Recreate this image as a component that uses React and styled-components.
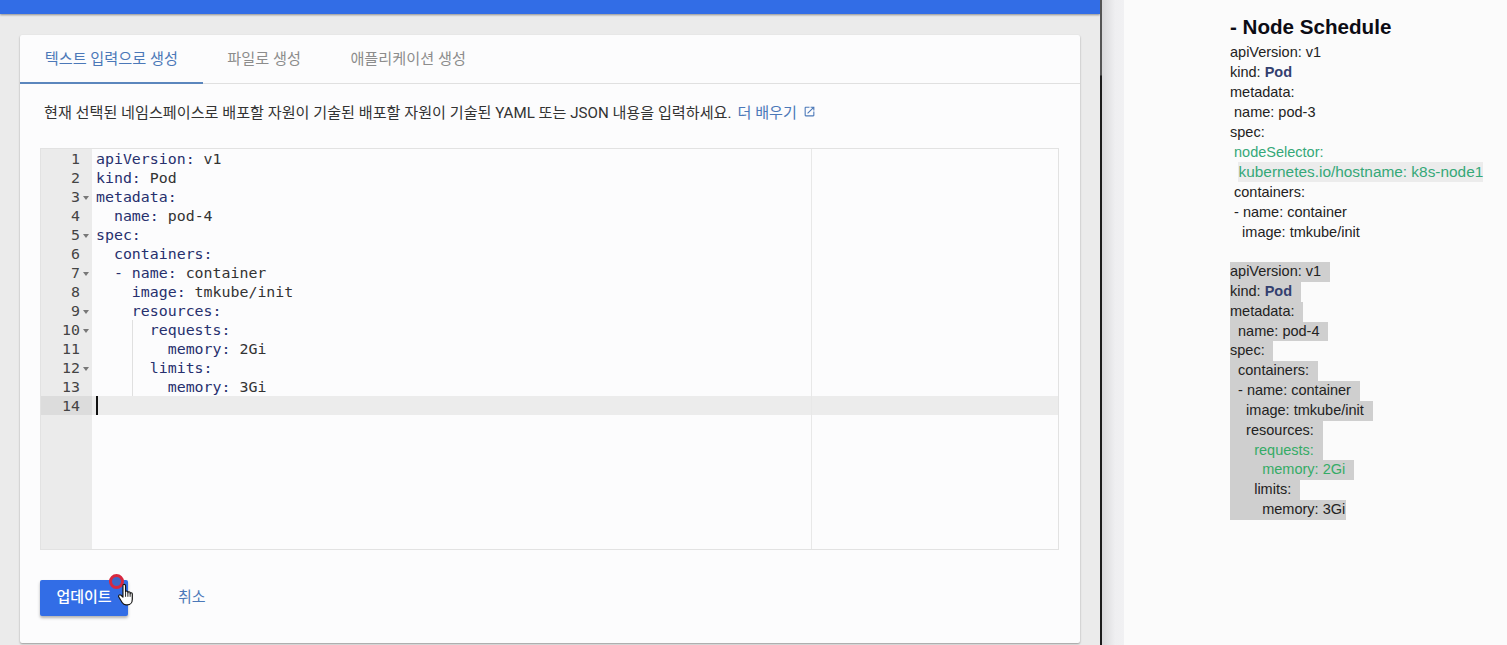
import React from 'react';
import styled, { createGlobalStyle } from 'styled-components';
import { MdOpenInNew } from 'react-icons/md';

const kr = `Roboto, 'Noto Sans CJK KR', sans-serif`;

const codeLines = [
  { key: 'apiVersion:', value: ' v1' },
  { key: 'kind:', value: ' Pod' },
  { key: 'metadata:', fold: true },
  { key: '  name:', value: ' pod-4' },
  { key: 'spec:', fold: true },
  { key: '  containers:' },
  { key: '  - name:', value: ' container', fold: true },
  { key: '    image:', value: ' tmkube/init' },
  { key: '    resources:', fold: true },
  { key: '      requests:', fold: true, guide: true },
  { key: '        memory:', value: ' 2Gi', guide: true },
  { key: '      limits:', fold: true, guide: true },
  { key: '        memory:', value: ' 3Gi', guide: true },
  { active: true },
];

const firstNote = [
  { text: 'apiVersion: v1' },
  { text: 'kind: ', pod: true },
  { text: 'metadata:' },
  { text: ' name: pod-3' },
  { text: 'spec:' },
  { text: ' nodeSelector:', green: true },
  { text: '  kubernetes.io/hostname: k8s-node1', green: true, mark: true },
  { text: ' containers:' },
  { text: ' - name: container' },
  { text: '   image: tmkube/init' },
];

const secondNote = [
  { text: 'apiVersion: v1', w: 100 },
  { text: 'kind: ', pod: true, w: 71 },
  { text: 'metadata:', w: 73 },
  { text: '  name: pod-4', w: 98 },
  { text: 'spec:', w: 43 },
  { text: '  containers:', w: 88 },
  { text: '  - name: container', w: 130 },
  { text: '    image: tmkube/init', w: 143 },
  { text: '    resources:', w: 93 },
  { text: '      requests:', w: 93, green: true },
  { text: '        memory: 2Gi', w: 124, green: true },
  { text: '      limits:', w: 70 },
  { text: '        memory: 3Gi', w: 116 },
];

const App = () => {
  return (
    <React.Fragment>
      <GlobalStyle />
      <Page>
        <LeftPane>
          <TopBar />
          <Content>
            <Card>
              <Tabs>
                <Tab $active>텍스트 입력으로 생성</Tab>
                <Tab>파일로 생성</Tab>
                <Tab>애플리케이션 생성</Tab>
              </Tabs>
              <CardBody>
                <Description>
                  현재 선택된 네임스페이스로 배포할 자원이 기술된 배포할 자원이 기술된 YAML 또는 JSON 내용을 입력하세요.
                  <LearnMore>더 배우기<MdOpenInNew size={13} /></LearnMore>
                </Description>
                <Editor>
                  <PrintMargin />
                  {codeLines.map((line, i) => (
                    <CodeRow key={i} $active={line.active}>
                      <LineNo $active={line.active}>
                        <span>{i + 1}</span>
                        <FoldMark $show={line.fold} />
                      </LineNo>
                      <CodeText $guide={line.guide}>
                        {line.active && <Caret />}
                        {line.key && <CodeKey>{line.key}</CodeKey>}
                        {line.value}
                      </CodeText>
                    </CodeRow>
                  ))}
                  <EditorRest />
                </Editor>
                <Actions>
                  <UpdateButton>
                    업데이트
                    <ClickRing />
                    <HandCursor viewBox="0 0 20 26">
                      <path
                        d="M6.6 2.6c0-2 2.9-2 2.9 0v7.2c0-1.7 2.6-1.6 2.6 0v.7c0-1.6 2.5-1.5 2.5.1v.9c0-1.4 2.4-1.3 2.4.4v5.7c0 3.4-2 6.4-5.6 6.4H10c-2 0-3.3-1-4.3-2.6L2 15.300c-1-1.700 1-3.400 2.500-2l2.100 2z"
                        fill="#fff"
                        stroke="#111"
                        strokeWidth="1.3"
                        strokeLinejoin="round"
                      />
                      <path d="M9.500 10v5M12.100 10.500v4.500M14.600 11.500v3.500" stroke="#111" strokeWidth="1" fill="none" />
                    </HandCursor>
                  </UpdateButton>
                  <CancelButton>취소</CancelButton>
                </Actions>
              </CardBody>
            </Card>
          </Content>
        </LeftPane>
        <Divider />
        <Scrollbar />
        <Notes>
          <NoteTitle>- Node Schedule</NoteTitle>
          <NoteGroup>
            {firstNote.map((line, i) => (
              <NoteLine key={i} $green={line.green} $mark={line.mark}>
                {line.text}
                {line.pod && <Pod>Pod</Pod>}
              </NoteLine>
            ))}
          </NoteGroup>
          <SelectedGroup>
            {secondNote.map((line, i) => (
              <SelectedLine key={i} $green={line.green} $w={line.w}>
                {line.text}
                {line.pod && <Pod>Pod</Pod>}
              </SelectedLine>
            ))}
          </SelectedGroup>
        </Notes>
      </Page>
    </React.Fragment>
  );
};

const GlobalStyle = createGlobalStyle`
  html, body {
    margin: 0;
    padding: 0;
    height: 100%;
    overflow: hidden;
    background: #fbfbfb;
  }
  * {
    box-sizing: border-box;
  }
`;

const Page = styled.div`
  display: flex;
  width: 1507px;
  height: 645px;
  overflow: hidden;
`;

const LeftPane = styled.div`
  display: flex;
  flex-direction: column;
  width: 1100px;
  height: 100%;
  background: #ebebeb;
`;

const TopBar = styled.div`
  height: 14px;
  flex-shrink: 0;
  background: #326de6;
  box-shadow: 0 1px 2px rgba(0, 0, 0, 0.4);
`;

const Content = styled.div`
  flex: 1;
  padding: 21px 20px 2px 20px;
`;

const Card = styled.div`
  display: flex;
  flex-direction: column;
  height: 100%;
  background: #fcfcfd;
  border-radius: 2px;
  box-shadow: 0 1px 2px rgba(0, 0, 0, 0.35);
`;

const Tabs = styled.div`
  display: flex;
  height: 49px;
  flex-shrink: 0;
  border-bottom: 1px solid #e0e0e0;
`;

const Tab = styled.div`
  display: flex;
  align-items: center;
  height: 49px;
  padding: 0 24.700px 3px;
  font-family: ${kr};
  font-size: 15.200px;
  color: ${(p) => (p.$active ? '#4b78b8' : '#8c8c8c')};
  border-bottom: 2px solid ${(p) => (p.$active ? '#5b86bd' : 'transparent')};
`;

const CardBody = styled.div`
  flex: 1;
  padding: 0 21px 0 20px;
`;

const Description = styled.div`
  display: flex;
  align-items: center;
  height: 64px;
  padding: 0 0 10px 4px;
  font-family: ${kr};
  font-size: 15.130px;
  color: #333;
  white-space: pre;
`;

const LearnMore = styled.span`
  display: inline-flex;
  align-items: center;
  gap: 6px;
  margin-left: 6px;
  color: #4b78b8;
`;

const Editor = styled.div`
  position: relative;
  display: flex;
  flex-direction: column;
  height: 402px;
  border: 1px solid #e2e2e2;
  font-family: 'DejaVu Sans Mono', monospace;
  font-size: 14.900px;
  color: #333;
`;

const PrintMargin = styled.div`
  position: absolute;
  top: 0;
  bottom: 0;
  left: 770px;
  width: 1px;
  background: #e8e8e8;
`;

const CodeRow = styled.div`
  display: flex;
  height: 19px;
  line-height: 21px;
  background: ${(p) => (p.$active ? '#ececec' : 'transparent')};
`;

const LineNo = styled.div`
  display: flex;
  justify-content: flex-end;
  align-items: flex-start;
  width: 51px;
  flex-shrink: 0;
  padding-right: 3px;
  color: #444;
  background: ${(p) => (p.$active ? '#dcdcdc' : '#ebebeb')};
`;

const FoldMark = styled.i`
  width: 0;
  height: 0;
  margin: 9px 0 0 3px;
  border-left: 3px solid transparent;
  border-right: 3px solid transparent;
  border-top: 4px solid ${(p) => (p.$show ? '#777' : 'transparent')};
`;

const CodeText = styled.div`
  position: relative;
  flex: 1;
  padding-left: 4px;
  white-space: pre;
  &::before {
    content: '';
    display: ${(p) => (p.$guide ? 'block' : 'none')};
    position: absolute;
    left: 40px;
    top: 0;
    bottom: 0;
    width: 1px;
    background: #e0e0e0;
  }
`;

const CodeKey = styled.span`
  color: #27306e;
`;

const Caret = styled.span`
  position: absolute;
  left: 4px;
  top: 0;
  width: 2px;
  height: 19px;
  background: #111;
`;

const EditorRest = styled.div`
  flex: 1;
  width: 51px;
  background: #ebebeb;
`;

const Actions = styled.div`
  display: flex;
  align-items: center;
  gap: 22px;
  margin-top: 30px;
`;

const UpdateButton = styled.div`
  position: relative;
  display: flex;
  align-items: center;
  justify-content: center;
  width: 88px;
  height: 36px;
  padding: 0 0 6px 0;
  border-radius: 2px;
  background: #326de6;
  box-shadow: 0 2px 3px rgba(0, 0, 0, 0.3);
  color: #fff;
  font-family: ${kr};
  font-size: 15px;
  font-weight: 500;
`;

const ClickRing = styled.span`
  position: absolute;
  left: 69px;
  top: -6px;
  width: 15px;
  height: 15px;
  border: 3px solid #d8283f;
  border-radius: 50%;
  background: #3f67c8;
`;

const HandCursor = styled.svg`
  position: absolute;
  left: 77px;
  top: 3px;
  width: 18px;
  height: 24px;
`;

const CancelButton = styled.div`
  padding: 0 28px 6px;
  font-family: ${kr};
  font-size: 15px;
  color: #4b78b8;
`;

const Divider = styled.div`
  width: 2px;
  flex-shrink: 0;
  background: linear-gradient(#555 0, #555 75px, #1c1c1c 76px);
`;

const Scrollbar = styled.div`
  width: 22px;
  flex-shrink: 0;
  background: linear-gradient(90deg, #d9d9db, #efeff1 60%, #f1f1f3);
`;

const Notes = styled.div`
  flex: 1;
  padding: 14px 0 0 106px;
  background: #fbfbfb;
  font-family: 'Liberation Sans', Arial, sans-serif;
  font-size: 14.500px;
  color: #222;
`;

const NoteTitle = styled.div`
  height: 28px;
  font-size: 20.600px;
  line-height: 26px;
  font-weight: bold;
  color: #0c0c14;
`;

const NoteGroup = styled.div`
  display: flex;
  flex-direction: column;
  align-items: flex-start;
`;

const NoteLine = styled.div`
  height: 20px;
  line-height: 20px;
  white-space: pre;
  font-size: ${(p) => (p.$mark ? '15.400px' : 'inherit')};
  color: ${(p) => (p.$green ? '#35a878' : '#222')};
  background: ${(p) => (p.$mark ? 'linear-gradient(90deg, transparent 8px, #ececec 8px)' : 'none')};
`;

const Pod = styled.b`
  color: #33406f;
`;

const SelectedGroup = styled.div`
  margin-top: 20px;
`;

const SelectedLine = styled.div`
  width: ${(p) => p.$w}px;
  height: 19.850px;
  line-height: 19.850px;
  white-space: pre;
  background: #cfcfcf;
  color: ${(p) => (p.$green ? '#35ab66' : '#222')};
`;

export default App;
